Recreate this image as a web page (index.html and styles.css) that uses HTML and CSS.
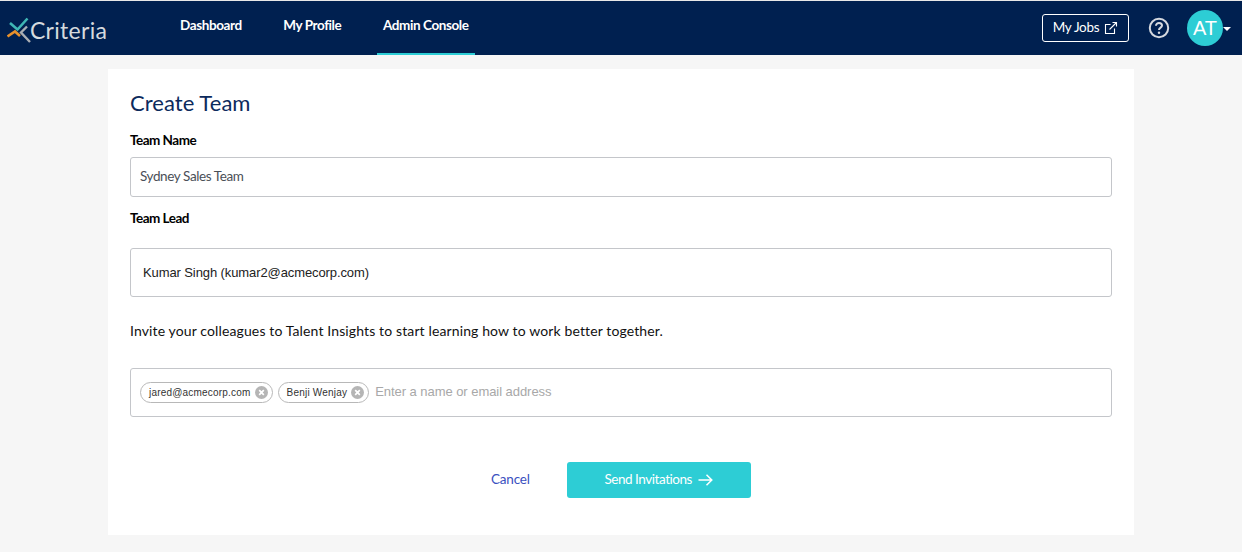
FILE: index.html
```html
<!DOCTYPE html>
<html lang="en">
<head>
<meta charset="utf-8">
<title>Create Team</title>
<link rel="stylesheet" href="styles.css">
</head>
<body>
<header class="topbar">
  <div class="logo">
    <svg class="logo-mark" width="25" height="26" viewBox="0 0 25 26" fill="none" aria-hidden="true">
      <path d="M3 6 L10.5 12.5 L20.5 1.5" stroke="#3fb6b4" stroke-width="2.6"/>
      <path d="M0.5 19.5 L8 14.5 L13 19" stroke="#e8912c" stroke-width="2.6"/>
      <path d="M20 9.5 L14 15.5 L23 25" stroke="#a9aeb4" stroke-width="2.4"/>
    </svg>
    <span class="logo-text">Criteria</span>
  </div>
  <nav class="nav">
    <a class="nav-item">Dashboard</a>
    <a class="nav-item">My Profile</a>
    <a class="nav-item active">Admin Console</a>
  </nav>
  <div class="top-actions">
    <a class="jobs-btn"><span class="jobs-label">My Jobs</span>
      <svg width="14" height="14" viewBox="0 0 14 14" fill="none" stroke="#fff" stroke-width="1.1" aria-hidden="true">
        <path d="M10.5 7.5 V12.5 H1.5 V3.5 H6.5"/>
        <path d="M5.5 8.5 L12.5 1.5 M8.5 1.5 H12.5 V5.5"/>
      </svg>
    </a>
    <svg class="help" width="22" height="22" viewBox="0 0 22 22" fill="none" aria-hidden="true">
      <circle cx="11" cy="11" r="9.2" stroke="#d5d9df" stroke-width="2"/>
      <path d="M8 8.8 C8 6.9 9.4 6 11 6 C12.7 6 14 7 14 8.5 C14 10.6 11 10.6 11 13" stroke="#d5d9df" stroke-width="2"/>
      <circle cx="11" cy="15.8" r="1.2" fill="#d5d9df"/>
    </svg>
    <div class="avatar">AT</div>
    <span class="caret"></span>
  </div>
</header>
<main class="card">
  <h1 class="title">Create Team</h1>
  <label class="label">Team Name</label>
  <div class="field field-name">Sydney Sales Team</div>
  <label class="label label-lead">Team Lead</label>
  <div class="field field-lead">Kumar Singh (kumar2@acmecorp.com)</div>
  <p class="invite">Invite your colleagues to Talent Insights to start learning how to work better together.</p>
  <div class="field field-tags">
    <span class="tag">jared@acmecorp.com<span class="tag-x"><svg width="13" height="13" viewBox="0 0 13 13" stroke="#fff" stroke-width="1.7" aria-hidden="true"><path d="M4.2 4.2 L8.8 8.8 M8.8 4.2 L4.2 8.8"/></svg></span></span>
    <span class="tag">Benji Wenjay<span class="tag-x"><svg width="13" height="13" viewBox="0 0 13 13" stroke="#fff" stroke-width="1.7" aria-hidden="true"><path d="M4.2 4.2 L8.8 8.8 M8.8 4.2 L4.2 8.8"/></svg></span></span>
    <span class="placeholder">Enter a name or email address</span>
  </div>
  <div class="actions">
    <a class="cancel">Cancel</a>
    <a class="send"><span class="send-label">Send Invitations</span>
      <svg width="15" height="12" viewBox="0 0 15 12" fill="none" stroke="#fff" stroke-width="1.5" aria-hidden="true"><path d="M0.5 6 H13.5 M8.5 0.8 L13.8 6 L8.5 11.2"/></svg>
    </a>
  </div>
</main>
</body>
</html>
```
FILE: styles.css
```css
* { box-sizing: border-box; }
html, body { margin: 0; padding: 0; }
body {
  background: #f6f6f6;
  font-family: Lato, "Liberation Sans", sans-serif;
  height: 552px;
  overflow: hidden;
}
.topbar {
  height: 55px;
  border-top: 1px solid #e8e8e8;
  background: #002050;
  display: flex;
  align-items: stretch;
  color: #fff;
}
.logo {
  display: flex;
  align-items: center;
  width: 174px;
  padding: 0 0 0 7px;
  flex: none;
}
.logo-mark { flex: none; margin-top: 3px; margin-right: -2px; }
.logo-text {
  font-size: 23px;
  font-weight: 400;
  color: #d5dade;
  line-height: 24px;
  letter-spacing: 0.3px;
  margin-top: 3px;
}
.nav { display: flex; gap: 29.5px; }
.nav-item {
  display: block;
  padding: 16px 6px 0;
  font-size: 13.5px;
  font-weight: 700;
  line-height: 17px;
  letter-spacing: -0.4px;
  color: #fff;
}
.nav-item.active {
  border-bottom: 2px solid #2dcdd5;
}
.top-actions {
  margin-left: auto;
  display: flex;
  align-items: center;
  padding-right: 11px;
}
.jobs-btn {
  width: 87px;
  height: 28px;
  border: 1px solid #fff;
  border-radius: 3px;
  display: flex;
  align-items: center;
  justify-content: center;
  gap: 5px;
  font-size: 13.5px;
  letter-spacing: -0.3px;
  color: #fff;
}
.jobs-label { margin-top: -2px; }
.help { margin-left: 19px; flex: none; }
.avatar {
  margin-left: 17px;
  width: 36px;
  height: 36px;
  border-radius: 50%;
  background: #2dcdd5;
  color: #fff;
  font-family: "Liberation Sans", sans-serif;
  font-size: 20px;
  line-height: 36px;
  text-align: center;
}
.caret {
  border-left: 4px solid transparent;
  border-right: 4px solid transparent;
  border-top: 4px solid #fff;
  margin-top: 2px;
}
.card {
  width: 1026px;
  height: 466px;
  margin: 14px 0 0 108px;
  background: #fff;
  padding: 21px 22px 0;
}
.title {
  margin: 0;
  font-size: 22px;
  font-weight: 400;
  line-height: 26px;
  color: #0c2a5c;
  letter-spacing: 0.05px;
}
.label {
  display: block;
  margin-top: 15px;
  font-size: 13.5px;
  font-weight: 700;
  line-height: 18px;
  letter-spacing: -0.5px;
  color: #000;
}
.label-lead { margin-top: 12px; }
.field {
  border: 1px solid #c4c6ca;
  border-radius: 3px;
  background: #fff;
  display: flex;
  align-items: center;
}
.field-name {
  margin-top: 8px;
  height: 40px;
  padding: 0 0 2px 9px;
  font-size: 13.5px;
  letter-spacing: -0.4px;
  color: #4a4f57;
}
.field-lead {
  margin-top: 21px;
  height: 49px;
  padding-left: 12px;
  font-family: "Liberation Sans", sans-serif;
  font-size: 13px;
  letter-spacing: -0.1px;
  color: #222;
}
.invite {
  margin: 25px 0 0;
  font-size: 14px;
  line-height: 18px;
  letter-spacing: 0.125px;
  color: #111;
}
.field-tags {
  margin-top: 28px;
  height: 49px;
  padding: 0 0 0 9px;
  gap: 5px;
  font-family: "Liberation Sans", sans-serif;
}
.tag {
  display: inline-flex;
  align-items: center;
  height: 21px;
  border: 1px solid #b8b8b8;
  border-radius: 11px;
  padding: 0 4px 0 8px;
  font-size: 10px;
  letter-spacing: 0.2px;
  color: #333;
  gap: 4px;
}
.tag-x {
  width: 13px;
  height: 13px;
  border-radius: 50%;
  background: #b5b5b5;
  display: block;
}
.tag-x svg { display: block; }
.placeholder {
  margin: -2px 0 0 1px;
  font-size: 13px;
  color: #a8a8a8;
  letter-spacing: -0.05px;
}
.actions {
  margin-top: 45px;
  display: flex;
  align-items: center;
  padding-left: 361px;
}
.cancel {
  margin-top: -2px;
  font-size: 13.5px;
  letter-spacing: -0.2px;
  color: #3a50c0;
}
.send {
  margin-left: 37px;
  width: 184px;
  height: 36px;
  background: #2dcdd5;
  border-radius: 3px;
  display: flex;
  align-items: center;
  justify-content: center;
  gap: 6px;
  font-size: 13.5px;
  letter-spacing: -0.45px;
  color: #fff;
}
.send-label { margin-top: -3px; }
```
